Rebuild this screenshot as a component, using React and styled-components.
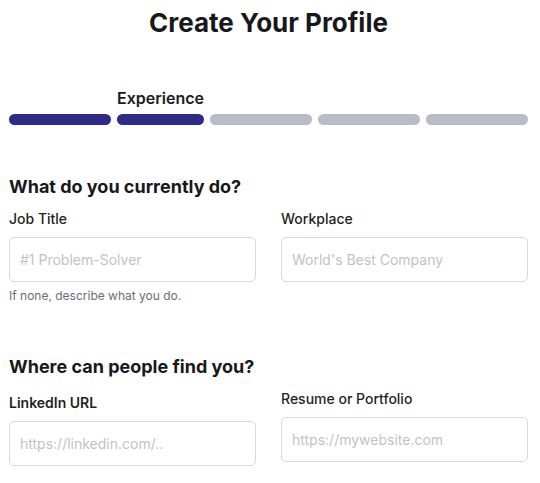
import React from "react";
import styled, { createGlobalStyle } from "styled-components";

const Global = createGlobalStyle`
  body {
    margin: 0;
    background: #ffffff;
    font-family: "Inter", "Noto Sans", sans-serif;
    color: #1a1a1f;
  }
`;

const Page = styled.main`
  width: 519px;
  padding: 7px 12px 0 9px;
`;

const Title = styled.h1`
  margin: 0;
  font-size: 26px;
  font-weight: 700;
  line-height: 32px;
  text-align: center;
  color: #18181b;
`;

const Steps = styled.div`
  display: flex;
  align-items: flex-end;
  gap: 6px;
  margin-top: 49px;
`;

const Step = styled.div`
  display: flex;
  flex-direction: column;
  gap: 6px;
  flex: ${(p) => (p.$current ? "0 0 auto" : "1 1 0")};
`;

const StepLabel = styled.span`
  font-size: 16px;
  font-weight: 600;
  line-height: 20px;
  color: #1b1b22;
`;

const Bar = styled.div`
  height: 11px;
  border-radius: 6px;
  background: ${(p) => (p.$done ? "#2e2a88" : "#babbc6")};
`;

const Section = styled.section`
  margin-top: ${(p) => p.$top}px;
`;

const Heading = styled.h2`
  margin: 0;
  font-size: 18px;
  font-weight: 700;
  line-height: 24px;
  color: #18181b;
`;

const Row = styled.div`
  display: grid;
  grid-template-columns: 1fr 1fr;
  column-gap: 25px;
  align-items: start;
  margin-top: 11px;
`;

const Field = styled.div`
  display: flex;
  flex-direction: column;
`;

const Label = styled.label`
  font-size: 14px;
  font-weight: ${(p) => (p.$strong ? 600 : 500)};
  line-height: 18px;
  color: #1f1f24;
  margin-top: ${(p) => p.$offset || 0}px;
  margin-bottom: 9px;
`;

const Input = styled.input`
  box-sizing: border-box;
  width: 100%;
  height: 45px;
  padding: 0 10px;
  border: 1px solid #d9d9dc;
  border-radius: 5px;
  font-family: inherit;
  font-size: 14px;
  color: #1f1f24;
  background: #fff;
  outline: none;

  &::placeholder {
    color: #c2c2c6;
  }
`;

const Help = styled.p`
  margin: 6px 0 0;
  font-size: 12px;
  line-height: 16px;
  color: #6c6c78;
`;

const steps = ["", "Experience", "", "", ""];

export default function App() {
  return (
    <>
      <Global />
      <Page>
        <Title>Create Your Profile</Title>
        <Steps>
          {steps.map((label, i) => (
            <Step key={i} $current={i === 1}>
              {i === 1 && <StepLabel>{label}</StepLabel>}
              <Bar $done={i <= 1} />
            </Step>
          ))}
        </Steps>

        <Section $top={50}>
          <Heading>What do you currently do?</Heading>
          <Row>
            <Field>
              <Label>Job Title</Label>
              <Input placeholder="#1 Problem-Solver" />
              <Help>If none, describe what you do.</Help>
            </Field>
            <Field>
              <Label>Workplace</Label>
              <Input placeholder="World's Best Company" />
            </Field>
          </Row>
        </Section>

        <Section $top={51}>
          <Heading>Where can people find you?</Heading>
          <Row>
            <Field>
              <Label $strong $offset={4}>LinkedIn URL</Label>
              <Input placeholder="https://linkedin.com/.." />
            </Field>
            <Field>
              <Label>Resume or Portfolio</Label>
              <Input placeholder="https://mywebsite.com" />
            </Field>
          </Row>
        </Section>
      </Page>
    </>
  );
}
